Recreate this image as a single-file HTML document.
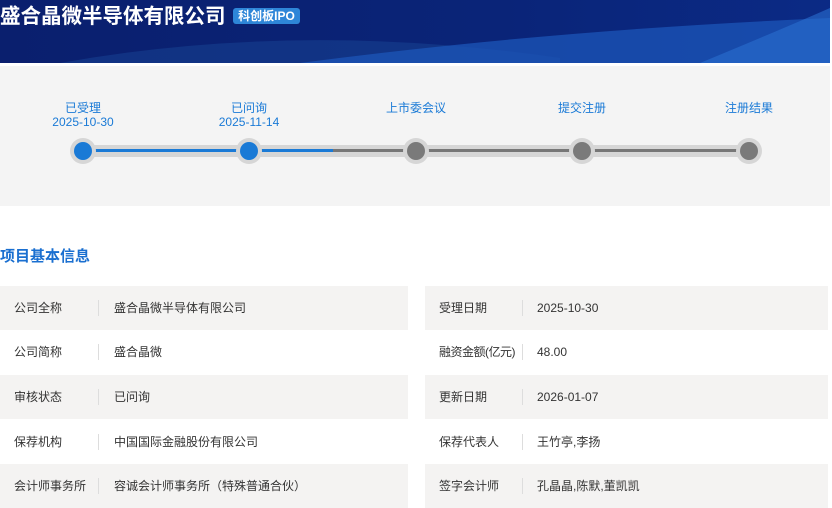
<!DOCTYPE html>
<html><head><meta charset="utf-8"><style>
*{margin:0;padding:0;box-sizing:border-box}
body{width:832px;height:500px;overflow:hidden;background:#fff;font-family:"Liberation Sans","Noto Sans CJK SC",sans-serif;position:relative}
.hdr{position:absolute;left:0;top:0;width:830px;height:63px;background:linear-gradient(90deg,#0a1f6e 0%,#0a2478 60%,#0b2a85 100%);overflow:hidden}
.hdr h1{position:absolute;left:0;top:5px;color:#fff;font-size:20.5px;line-height:24px;font-weight:bold;letter-spacing:0}
.tag{position:absolute;left:233px;top:8px;width:67px;height:16px;text-align:center;background:#2e86d8;color:#fff;font-size:12px;line-height:16px;border-radius:3px;font-weight:bold}
.gray{position:absolute;left:0;top:66px;width:830px;height:140px;background:#f4f4f4}
.lab{position:absolute;width:120px;text-align:center;color:#1a7ad6;font-size:12px;line-height:14px}
.track{position:absolute;left:74px;top:145px;width:684px;height:12px;background:#d6d6d6;border-radius:6px}
.line{position:absolute;top:149px;height:3px}
.node{position:absolute;top:138px;width:26px;height:26px;border-radius:50%;background:#d6d6d6}
.node i{position:absolute;left:4px;top:4px;width:18px;height:18px;border-radius:50%;background:#7a7a7a}
.node.a i{background:#1a7ad6}
h2{position:absolute;left:0;top:245px;font-size:15px;color:#1a6fd0;font-weight:bold}
.row{position:absolute;height:44px;font-size:12px;color:#333}
.row span{position:absolute;top:13px;line-height:18px;white-space:nowrap}
.row b{position:absolute;top:14px;width:1px;height:16px;background:#ddd}
.g{background:#f4f3f2}
</style></head><body>
<div class="hdr">
<svg width="830" height="63" style="position:absolute;left:0;top:0">
<path d="M60 63 Q300 20 560 58 L560 63Z" fill="#16408f" opacity=".6"/>
<path d="M300 63 Q550 30 830 18 L830 63Z" fill="#1c55b8" opacity=".75"/>
<path d="M700 63 Q780 30 830 8 L830 63Z" fill="#2a6fd0" opacity=".6"/>
</svg>
<h1>盛合晶微半导体有限公司</h1><span class="tag">科创板IPO</span></div>
<div class="gray"></div>
<div class="lab" style="left:23px;top:101px">已受理<br>2025-10-30</div>
<div class="lab" style="left:189px;top:101px">已问询<br>2025-11-14</div>
<div class="lab" style="left:356px;top:101px">上市委会议</div>
<div class="lab" style="left:522px;top:101px">提交注册</div>
<div class="lab" style="left:689px;top:101px">注册结果</div>
<div class="track"></div>
<div class="line" style="left:83px;width:250px;background:#1a7ad6"></div>
<div class="line" style="left:333px;width:416px;background:#777"></div>
<div class="node a" style="left:70px"><i></i></div>
<div class="node a" style="left:236px"><i></i></div>
<div class="node" style="left:403px"><i></i></div>
<div class="node" style="left:569px"><i></i></div>
<div class="node" style="left:736px"><i></i></div>
<h2>项目基本信息</h2>
<div class="row g" style="left:0;top:286px;width:408px"><span style="left:14px">公司全称</span><b style="left:98px"></b><span style="left:114px">盛合晶微半导体有限公司</span></div>
<div class="row g" style="left:425px;top:286px;width:403px"><span style="left:14px">受理日期</span><b style="left:97px"></b><span style="left:112px">2025-10-30</span></div>
<div class="row" style="left:0;top:330px;width:408px"><span style="left:14px">公司简称</span><b style="left:98px"></b><span style="left:114px">盛合晶微</span></div>
<div class="row" style="left:425px;top:330px;width:403px"><span style="left:14px;letter-spacing:-0.5px">融资金额(亿元)</span><b style="left:97px"></b><span style="left:112px">48.00</span></div>
<div class="row g" style="left:0;top:375px;width:408px"><span style="left:14px">审核状态</span><b style="left:98px"></b><span style="left:114px">已问询</span></div>
<div class="row g" style="left:425px;top:375px;width:403px"><span style="left:14px">更新日期</span><b style="left:97px"></b><span style="left:112px">2026-01-07</span></div>
<div class="row" style="left:0;top:420px;width:408px"><span style="left:14px">保荐机构</span><b style="left:98px"></b><span style="left:114px">中国国际金融股份有限公司</span></div>
<div class="row" style="left:425px;top:420px;width:403px"><span style="left:14px">保荐代表人</span><b style="left:97px"></b><span style="left:112px">王竹亭,李扬</span></div>
<div class="row g" style="left:0;top:464px;width:408px"><span style="left:14px">会计师事务所</span><b style="left:98px"></b><span style="left:114px">容诚会计师事务所（特殊普通合伙）</span></div>
<div class="row g" style="left:425px;top:464px;width:403px"><span style="left:14px">签字会计师</span><b style="left:97px"></b><span style="left:112px">孔晶晶,陈默,董凯凯</span></div>
</body></html>
